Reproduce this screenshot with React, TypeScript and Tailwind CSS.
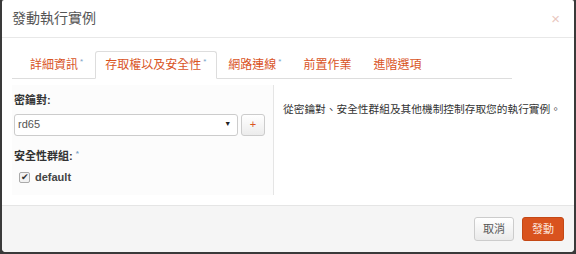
const cjk = { fontFamily: '"Liberation Sans", "Noto Sans CJK TC", sans-serif' };

function Tab({ label, star, active }: { label: string; star?: boolean; active?: boolean }) {
  return (
    <div
      className={`h-[28px] pl-[9px] pr-[10px] mr-[1px] shrink-0 whitespace-nowrap flex items-center text-[12px] text-[#d9541f] border ${
        active ? "bg-white border-[#ddd] border-b-white rounded-t-[3px]" : "border-transparent"
      }`}
    >
      {label}
      {star && <span className="text-[8px] text-[#7aa3c8] ml-[2px] -mt-[6px]">*</span>}
    </div>
  );
}

export default function App() {
  return (
    <div className="w-[576px] h-[254px] bg-[#3a3a3a] px-[2px] pb-[2px]" style={cjk}>
      <div className="h-full bg-white rounded-b-[4px] rounded-t-[2px] flex flex-col overflow-hidden">
        {/* header */}
        <div className="h-[38px] border-b border-[#e8e8e8] flex items-center justify-between pl-[10px] pr-[14px] shrink-0">
          <span className="text-[14px] text-[#555]">發動執行實例</span>
          <span className="text-[15px] text-[#e9c8c0] leading-none">×</span>
        </div>

        {/* body */}
        <div className="flex-1 px-[10px] pt-[13px]">
          <div className="flex border-b border-[#ddd] pl-[8px] h-[28px] w-[500px]">
            <div className="flex h-[29px]">
              <Tab label="詳細資訊" star />
              <Tab label="存取權以及安全性" star active />
              <Tab label="網路連線" star />
              <Tab label="前置作業" />
              <Tab label="進階選項" />
            </div>
          </div>

          <div className="flex mt-[6px] h-[110px]">
            <div className="w-[262px] bg-[#fcfcfc] pl-[2px] pr-[8px] pt-[7px] border-r border-[#e5e5e5]">
              <div className="text-[11px] font-bold text-[#333]">密鑰對:</div>
              <div className="flex gap-[3px] mt-[5px]">
                <div className="w-[225px] h-[22px] border border-[#ccc] rounded-[3px] bg-white flex items-center justify-between pl-[3px] pr-[6px]">
                  <span className="text-[11px] text-[#555]">rd65</span>
                  <span className="text-[7px] text-[#222]">▼</span>
                </div>
                <div className="w-[24px] h-[22px] border border-[#ccc] rounded-[3px] bg-gradient-to-b from-white to-[#ececec] flex items-center justify-center text-[11px] text-[#d9541f]">
                  +
                </div>
              </div>
              <div className="text-[11px] font-bold text-[#333] mt-[12px]">
                安全性群組: <span className="text-[8px] text-[#7aa3c8] align-top">*</span>
              </div>
              <div className="flex items-center gap-[5px] mt-[5px] pl-[5px]">
                <span className="w-[11px] h-[11px] border border-[#aaa] rounded-[2px] bg-[#f2f2f2] flex items-center justify-center text-[9px] leading-none text-[#333]">
                  ✔
                </span>
                <span className="text-[11px] font-bold text-[#444]">default</span>
              </div>
            </div>
            <div className="flex-1 pl-[9px] pt-[16px] text-[10.7px] whitespace-nowrap text-[#333]">
              從密鑰對、安全性群組及其他機制控制存取您的執行實例。
            </div>
          </div>
        </div>

        {/* footer */}
        <div className="h-[47px] border-t border-[#e5e5e5] bg-[#f5f5f5] flex items-center justify-end gap-[8px] pr-[10px] shrink-0">
          <div className="h-[24px] px-[8px] border border-[#ccc] rounded-[3px] bg-gradient-to-b from-white to-[#eaeaea] flex items-center text-[11px] text-[#555]">
            取消
          </div>
          <div className="h-[24px] px-[9px] rounded-[3px] bg-[#d9531e] border border-[#c44815] flex items-center text-[11px] text-[#fde7df]">
            發動
          </div>
        </div>
      </div>
    </div>
  );
}
